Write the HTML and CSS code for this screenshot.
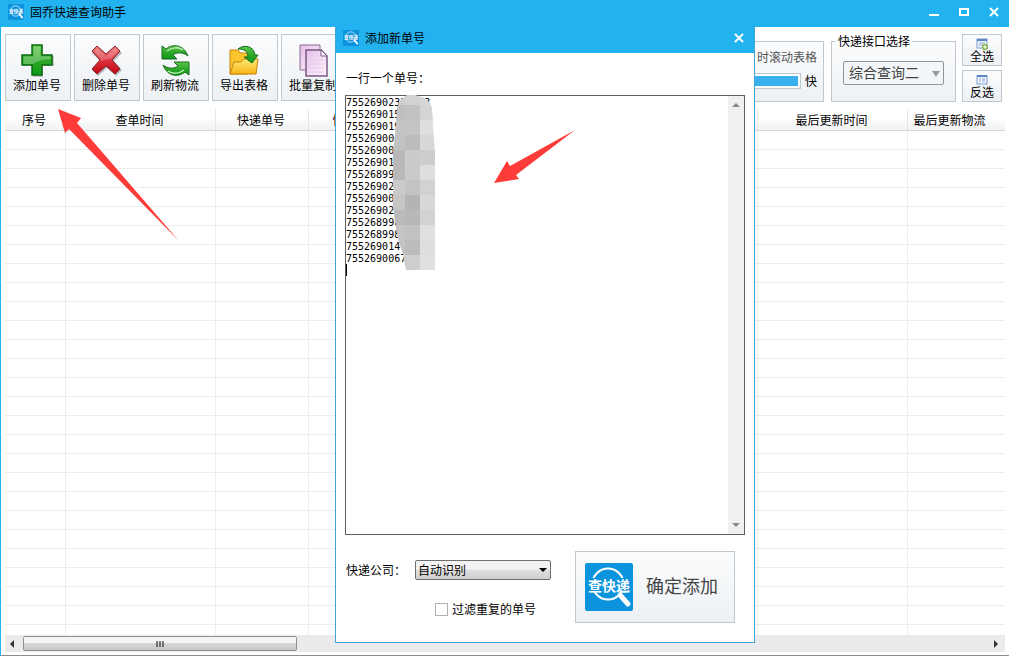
FILE: index.html
```html
<!DOCTYPE html>
<html lang="zh-CN">
<head>
  <meta charset="UTF-8" />
  <meta name="viewport" content="width=device-width, initial-scale=1.0" />
  <title>固乔快递查询助手</title>
  <link rel="stylesheet" href="styles.css">
</head>
<body>
  <!-- Shared logo and gradients -->
  <svg class="defs" aria-hidden="true">
    <defs>
      <linearGradient id="gGreen" x1="0" y1="0" x2="0" y2="1">
        <stop offset="0" stop-color="#5cc94c" />
        <stop offset="0.5" stop-color="#2fa82a" />
        <stop offset="1" stop-color="#0c9a14" />
      </linearGradient>
      <linearGradient id="gRed" x1="0" y1="0" x2="0" y2="1">
        <stop offset="0" stop-color="#ec7b7b" />
        <stop offset="0.5" stop-color="#dc3440" />
        <stop offset="1" stop-color="#c00512" />
      </linearGradient>
      <linearGradient id="gFolder" x1="0" y1="0" x2="0" y2="1">
        <stop offset="0" stop-color="#ffe873" />
        <stop offset="1" stop-color="#f7b516" />
      </linearGradient>
      <linearGradient id="gPage" x1="0" y1="0" x2="1" y2="1">
        <stop offset="0" stop-color="#e6bfe8" />
        <stop offset="1" stop-color="#fdf5fd" />
      </linearGradient>
      <symbol id="logo" viewBox="0 0 48 48">
        <rect width="48" height="48" rx="2" fill="#0c93de" />
        <circle cx="23" cy="21" r="15.500" fill="none" stroke="#fff" stroke-width="2" />
        <path d="M35 32L43 41" stroke="#fff" stroke-width="5" stroke-linecap="round" />
        <rect x="3" y="15" width="42" height="14" fill="#0c93de" />
        <text x="24" y="28" text-anchor="middle" class="logo-text">查快递</text>
      </symbol>
    </defs>
  </svg>

  <div class="window">
    <header class="title-bar">
      <svg class="title-logo"><use href="#logo" /></svg>
      <h1 class="title">固乔快递查询助手</h1>
      <div class="window-buttons">
        <button type="button" class="window-btn" aria-label="最小化">
          <svg width="12" height="12"><path d="M1 9H11" stroke="#fff" stroke-width="2" /></svg>
        </button>
        <button type="button" class="window-btn" aria-label="最大化">
          <svg width="12" height="12"><rect x="2" y="3" width="8" height="6" fill="none" stroke="#fff" stroke-width="2" /></svg>
        </button>
        <button type="button" class="window-btn" aria-label="关闭">
          <svg width="12" height="12"><path d="M2 2L10 10M10 2L2 10" stroke="#fff" stroke-width="2" /></svg>
        </button>
      </div>
    </header>

    <!-- Toolbar -->
    <div class="toolbar">
      <button type="button" class="tool-btn">
        <svg class="tool-icon" viewBox="0 0 34 34">
          <path d="M13 3H23V13H34V23H23V34H13V23H3V13H13Z" fill="#000" opacity="0.2" />
          <path d="M12 2H22V12H32V22H22V32H12V22H2V12H12Z" fill="url(#gGreen)" stroke="#0b6b10" stroke-width="1.500" />
          <path d="M13.500 3.500H20.500V13.500H30.500V16C22 16 16 19 13 21H3.500V13.500H13.500Z" fill="#fff" opacity="0.25" />
        </svg>
        添加单号
      </button>
      <button type="button" class="tool-btn">
        <svg class="tool-icon" viewBox="0 0 34 34">
          <path d="M9 4L18 12L27 4L33 10L25 18L33 27L27 33L18 25L9 33L3 27L11 18L3 10Z" fill="#000" opacity="0.25" />
          <path d="M8 3L17 11L26 3L31 8L23 17L31 26L26 31L17 23L8 31L3 26L11 17L3 8Z" fill="url(#gRed)" stroke="#8a2028" stroke-width="1" />
          <path d="M8 5L17 13L26 5L29 8L22 16Q15 16 11 19L12 17L5 8Z" fill="#fff" opacity="0.2" />
        </svg>
        删除单号
      </button>
      <button type="button" class="tool-btn">
        <svg class="tool-icon" viewBox="0 0 34 34">
          <g fill="url(#gGreen)" stroke="#176b20" stroke-width="1">
            <path d="M4 3L8 6C15 0 26 2 30 13C25 9 19 9 15 12L19 16H4Z" />
            <path d="M31 32L27 29C20 35 9 33 5 22C10 26 16 26 20 23L16 19H31Z" />
          </g>
          <path d="M9 8C14 4 21 4 25 7M26 27C21 31 14 31 10 28" fill="none" stroke="#b8f0b0" stroke-width="1.500" />
        </svg>
        刷新物流
      </button>
      <button type="button" class="tool-btn">
        <svg class="tool-icon" viewBox="0 0 34 34">
          <path d="M3 31V7H11L13 10H21V31Z" fill="#fbc52c" stroke="#c8830c" />
          <path d="M3 31L7 19H14L17 16H31L29 31Z" fill="url(#gFolder)" stroke="#c8830c" />
          <path d="M11 6C17 1 27 3 28 12H31L25 20L17 14H21C21 8 17 6 11 6Z" fill="url(#gGreen)" stroke="#176b20" />
        </svg>
        导出表格
      </button>
      <button type="button" class="tool-btn">
        <svg class="tool-icon" viewBox="0 0 34 34">
          <path d="M4 2H24V27H4Z" fill="url(#gPage)" stroke="#8c6a94" />
          <path d="M10 7H25L31 13V33H10Z" fill="url(#gPage)" stroke="#7a5a84" stroke-width="1.500" />
          <path d="M25 7V13H31Z" fill="#fff" stroke="#7a5a84" />
          <path d="M13 17H28M13 21H28M13 25H28M13 29H28" stroke="#e6cbe9" />
        </svg>
        批量复制
      </button>

      <div class="options">
        <fieldset class="group scroll-group">
          <label for="speed" class="soft-text">时滚动表格</label>
          <div class="speed-row">
            <input type="range" id="speed" class="speed" value="100">
            <span>快</span>
          </div>
        </fieldset>

        <fieldset class="group api-group">
          <legend>快递接口选择</legend>
          <div class="select-wrap api-wrap">
            <select class="api-select" aria-label="快递接口选择">
              <option>综合查询二</option>
            </select>
          </div>
        </fieldset>

        <div class="side-buttons">
          <button type="button" class="side-btn">
            <svg width="12" height="12" viewBox="0 0 12 12">
              <rect x="1" y="1" width="10" height="9" fill="#eef4ff" stroke="#7f9ccc" />
              <path d="M1 2H11" stroke="#5b83c8" stroke-width="2" />
              <path d="M3 5H9M3 7H7" stroke="#8aa8d8" />
              <circle cx="9" cy="9" r="3" fill="#7fae3c" />
              <path d="M7 9H11M9 7V11" stroke="#fff" />
            </svg>
            全选
          </button>
          <button type="button" class="side-btn">
            <svg width="12" height="12" viewBox="0 0 12 12">
              <rect x="1" y="2" width="10" height="8" fill="#eef4ff" stroke="#7f9ccc" />
              <path d="M1 2H11" stroke="#5b83c8" stroke-width="2" />
              <path d="M3 5H5M6 5H9M3 7H5M6 7H9" stroke="#8aa8d8" />
            </svg>
            反选
          </button>
        </div>
      </div>
    </div>

    <!-- Order list -->
    <div class="list">
      <table class="orders">
        <colgroup>
          <col class="col-index">
          <col class="col-time">
          <col class="col-number">
          <col class="col-company">
          <col>
          <col class="col-time">
          <col class="col-last">
        </colgroup>
        <thead>
          <tr>
            <th>序号</th>
            <th>查单时间</th>
            <th>快递单号</th>
            <th>快递公司</th>
            <th></th>
            <th>最后更新时间</th>
            <th class="last">最后更新物流</th>
          </tr>
        </thead>
        <tbody id="orderRows"></tbody>
      </table>
    </div>

    <div class="h-scroll">
      <svg width="8" height="8"><path d="M6 0V8L2 4Z" fill="#333" /></svg>
      <div class="h-track">
        <div class="h-thumb">
          <svg width="9" height="6"><path d="M1 0V6M4 0V6M7 0V6" stroke="#555" stroke-width="2" opacity="0.8" /></svg>
        </div>
      </div>
      <svg width="8" height="8"><path d="M2 0V8L6 4Z" fill="#333" /></svg>
    </div>
  </div>

  <!-- Add dialog -->
  <section class="dialog" role="dialog" aria-labelledby="dialogTitle">
    <header class="dialog-bar">
      <svg class="title-logo"><use href="#logo" /></svg>
      <h2 class="title" id="dialogTitle">添加新单号</h2>
      <button type="button" class="window-btn" aria-label="关闭">
        <svg width="12" height="12"><path d="M2 2L10 10M10 2L2 10" stroke="#fff" stroke-width="2" /></svg>
      </button>
    </header>

    <form class="dialog-body">
      <label for="numbers" class="numbers-label">一行一个单号：</label>
      <div class="numbers-box">
        <textarea id="numbers" class="numbers" wrap="off" spellcheck="false">
7552690233   3
755269015
755269019
75526900
75526900
75526901
75526899
75526902
75526900
75526902
755268998
755268998
755269014
7552690067
</textarea>
        <div class="v-scroll">
          <svg width="8" height="4"><path d="M0 4L4 0L8 4Z" fill="#888" /></svg>
          <svg width="8" height="4"><path d="M0 0L4 4L8 0Z" fill="#888" /></svg>
        </div>
        <span class="caret"></span>
        <!-- Mosaic over the end of the numbers -->
        <svg class="mosaic" width="42" height="175" viewBox="393 95 42 175">
          <clipPath id="blob">
            <path d="M407 95H415L425 98L430 103L432 108L434 138L435 152V270H406L403 255L398 238L395 222L393 205V152L396 125L397 108L400 100Z" />
          </clipPath>
          <g clip-path="url(#blob)" id="mosaicCells"></g>
        </svg>
      </div>

      <div class="dialog-footer">
        <div class="settings">
          <div class="company-row">
            <label for="company">快递公司：</label>
            <div class="select-wrap company-wrap">
              <select id="company" class="company-select">
                <option>自动识别</option>
              </select>
            </div>
          </div>
          <label class="filter-row">
            <input type="checkbox" class="filter-box">
            过滤重复的单号
          </label>
        </div>
        <button type="button" class="confirm-btn">
          <svg class="confirm-logo"><use href="#logo" /></svg>
          <span class="confirm-text">确定添加</span>
        </button>
      </div>
    </form>
  </section>

  <!-- Guide arrows -->
  <svg class="arrow arrow-add" width="121" height="132" viewBox="58 109 121 132">
    <path d="M58 109L81 118L77 123L179 241L69 129L65 133Z" fill="#fd3c3a" />
  </svg>
  <svg class="arrow arrow-numbers" width="81" height="53" viewBox="494 130 81 53">
    <path d="M494 183L507 161L510 166L575 130L516 175L519 179Z" fill="#fd3c3a" />
  </svg>

  <script src="script.js"></script>
</body>
</html>
```

FILE: styles.css
```css
:root {
  --blue: #22b2ef;
  --line: #bfc8d0;
  --panel: linear-gradient(#fbfcfd, #edf1f4);
}

* {
  box-sizing: border-box;
}

html, body {
  height: 100%;
  margin: 0;
}

body {
  font-family: "Noto Sans CJK SC", sans-serif;
  font-size: 12px;
  line-height: 16px;
  color: #000;
  background: #fff;
  overflow: hidden;
}

button, select, input, textarea {
  font: inherit;
  color: inherit;
  margin: 0;
}

svg {
  display: block;
  flex: none;
}

.defs {
  position: absolute;
  width: 0;
  height: 0;
}

.logo-text {
  font-size: 14px;
  font-weight: 700;
  fill: #fff;
}

.window {
  display: flex;
  flex-direction: column;
  height: 100vh;
  border-left: 1px solid var(--blue);
  border-bottom: 1px solid #8c8c8c;
}

/* Title bars */
.title-bar, .dialog-bar {
  display: flex;
  align-items: center;
  background: var(--blue);
  padding: 0 9px 3px 7px;
  height: 27px;
  flex: none;
}

.title-logo {
  width: 16px;
  height: 16px;
}

.title {
  flex: 1;
  margin: 0 0 0 6px;
  font-size: 12px;
  font-weight: 400;
}

.window-buttons {
  display: flex;
  gap: 18px;
}

.window-btn {
  border: 0;
  padding: 0;
  background: none;
}

/* Toolbar */
.toolbar {
  display: flex;
  gap: 3px;
  padding: 7px 7px 7px 4px;
}

.tool-btn {
  display: flex;
  flex-direction: column;
  align-items: center;
  flex: none;
  width: 66px;
  height: 67px;
  padding: 8px 2px 0 0;
  border: 1px solid var(--line);
  background: var(--panel);
  white-space: nowrap;
}

.tool-icon {
  width: 34px;
  height: 34px;
}

.options {
  display: flex;
  flex: none;
  align-items: flex-end;
  margin-left: auto;
}

.group {
  margin: 0;
  border: 1px solid var(--line);
  background: var(--panel);
}

.group legend {
  padding: 0 2px;
  line-height: 12px;
}

.scroll-group {
  width: 180px;
  height: 61px;
  margin-right: 7px;
  padding: 7px 6px;
  text-align: right;
}

.soft-text {
  color: #555;
}

.speed-row {
  display: flex;
  align-items: center;
  gap: 4px;
  margin-top: 8px;
}

.speed {
  appearance: none;
  flex: 1;
  min-width: 0;
  height: 16px;
  padding: 2px;
  border: 1px solid var(--line);
  background: linear-gradient(#38b1ec, #38b1ec) content-box, #fff;
}

.speed::-webkit-slider-thumb {
  appearance: none;
  width: 0;
}

.api-group {
  width: 125px;
  height: 67px;
  margin-right: 6px;
  padding: 14px 11px 0;
}

.api-group legend {
  margin-left: -7px;
}

.select-wrap {
  position: relative;
}

.select-wrap select {
  appearance: none;
  display: block;
  width: 100%;
  border-radius: 2px;
}

/* drop-down triangle */
.select-wrap::after {
  content: "";
  position: absolute;
  top: 50%;
  right: 4px;
  margin-top: -2px;
  border: 4px solid transparent;
  border-top-color: #000;
  border-bottom: 0;
  pointer-events: none;
}

.api-wrap::after {
  border-top-color: #999;
  border-top-width: 6px;
}

.select-wrap .api-select {
  height: 24px;
  padding: 0 5px 2px;
  border: 1px solid #8e969c;
  background: #f3f6f8;
  color: #444;
  font-size: 14px;
  line-height: 20px;
}

.side-buttons {
  display: flex;
  flex-direction: column;
  gap: 4px;
}

.side-btn {
  display: flex;
  flex-direction: column;
  align-items: center;
  width: 40px;
  height: 32px;
  padding: 3px 0 0;
  border: 1px solid var(--line);
  background: var(--panel);
  line-height: 12px;
}

/* List */
.list {
  flex: 1;
  min-height: 0;
  margin: 0 4px;
  overflow: hidden;
}

.orders {
  width: 100%;
  table-layout: fixed;
  border-collapse: separate;
  border-spacing: 0;
}

.col-index { width: 61px; }
.col-time { width: 150px; }
.col-number { width: 93px; }
.col-company { width: 98px; }
.col-last { width: 97px; }

.orders th {
  height: 22px;
  padding: 0 2px 0 0;
  font-weight: 400;
  border-right: 1px solid #e3e6e8;
  border-bottom: 1px solid #d5d8da;
  background: linear-gradient(#fff 40%, #f0f1f3);
}

.orders th.last {
  padding-right: 14px;
}

.orders td {
  height: 19px;
  padding: 0;
  border-right: 1px solid #ececec;
  border-bottom: 1px solid #ececec;
}

.orders th:last-child, .orders td:last-child {
  border-right: 0;
}

.h-scroll {
  display: flex;
  align-items: center;
  flex: none;
  height: 17px;
  margin: 0 4px 3px;
  padding: 0 5px 0 3px;
  background: #ebebeb;
}

.h-track {
  flex: 1;
  padding: 0 7px;
}

.h-thumb {
  display: flex;
  align-items: center;
  justify-content: center;
  width: 28.5%;
  height: 15px;
  border: 1px solid #8f8f8f;
  border-radius: 2px;
  background: linear-gradient(#f4f4f4 45%, #d6d6d6 50%, #c8c8c8);
}

/* Dialog */
.dialog {
  position: absolute;
  top: 25px;
  left: 335px;
  width: 420px;
  border: 1px solid #3fa4db;
  border-top: 0;
  background: #fff;
}

.dialog-bar {
  height: 28px;
}

.dialog-body {
  padding: 17px 9px 19px;
}

.numbers-label {
  display: block;
  margin-bottom: 9px;
  padding-left: 1px;
}

.numbers-box {
  position: relative;
  display: flex;
  height: 440px;
  border: 1px solid #5e5e63;
}

.numbers {
  flex: 1;
  min-width: 0;
  padding: 1px 0 0;
  border: 0;
  outline: 0;
  resize: none;
  overflow: hidden;
  font-family: "DejaVu Sans Mono", monospace;
  font-size: 10px;
  line-height: 12px;
}

.v-scroll {
  display: flex;
  flex-direction: column;
  align-items: center;
  justify-content: space-between;
  width: 16px;
  padding: 7px 0;
  background: #f0f0f0;
}

.caret {
  position: absolute;
  top: 168px;
  left: 0;
  width: 1px;
  height: 12px;
  background: #000;
}

.mosaic {
  position: absolute;
  top: -1px;
  left: 47px;
}

.dialog-footer {
  display: flex;
  justify-content: space-between;
  padding: 16px 10px 0 1px;
}

.settings {
  padding-top: 9px;
}

.company-row {
  display: flex;
  align-items: center;
}

.company-row label {
  width: 69px;
}

.company-wrap {
  width: 136px;
}

.select-wrap .company-select {
  height: 20px;
  padding: 0 2px;
  border: 1px solid #707070;
  background: linear-gradient(#f3f3f3 45%, #dedede 50%, #d0d0d0);
  line-height: 18px;
}

.filter-row {
  display: flex;
  align-items: center;
  gap: 4px;
  margin: 21px 0 0 89px;
}

.filter-box {
  appearance: none;
  width: 13px;
  height: 13px;
  border: 1px solid #b0b0b0;
  background: #fff;
}

.confirm-btn {
  display: flex;
  align-items: center;
  gap: 13px;
  width: 160px;
  height: 72px;
  padding: 0 9px;
  border: 1px solid var(--line);
  background: var(--panel);
  color: #444;
  font-size: 18px;
  line-height: 24px;
  white-space: nowrap;
}

.confirm-text {
  padding-bottom: 4px;
}

.confirm-logo {
  width: 48px;
  height: 48px;
}

/* Guide arrows */
.arrow {
  position: absolute;
  pointer-events: none;
}

.arrow-add {
  top: 109px;
  left: 58px;
}

.arrow-numbers {
  top: 130px;
  left: 494px;
}
```

FILE: script.js
```js
// Empty rows of the list
const rows = document.getElementById('orderRows');
for (let i = 0; i < 27; i++) {
  const tr = rows.insertRow();
  for (let j = 0; j < 7; j++) {
    tr.insertCell();
  }
}

// Grey levels of the mosaic, one line for each row of 15px cells
const cells = [
  ['#d0d0d0', '#d2d2d2', '#d6d6d6'],
  ['#c0c0c0', '#c2c2c2', '#d4d4d4'],
  ['#c4c4c4', '#c4c4c4', '#dedede'],
  ['#c2c2c2', '#bcbcbc', '#d8d8d8'],
  ['#b8b8b8', '#cbcbcb', '#cdcdcd'],
  ['#b8b8b8', '#cacaca', '#dedede'],
  ['#cacaca', '#c4c4c4', '#d2d2d2'],
  ['#c6c6c6', '#b4b4b4', '#d8d8d8'],
  ['#bababa', '#b8b8b8', '#d2d2d2'],
  ['#c4c4c4', '#c2c2c2', '#e0e0e0'],
  ['#c2c2c2', '#bcbcbc', '#dedede'],
  ['#d2d2d2', '#cecece', '#e0e0e0']
];
const mosaic = document.getElementById('mosaicCells');
cells.forEach(function (line, y) {
  line.forEach(function (color, x) {
    const rect = document.createElementNS('http://www.w3.org/2000/svg', 'rect');
    rect.setAttribute('x', 390 + x * 15);
    rect.setAttribute('y', 90 + y * 15);
    rect.setAttribute('width', 15);
    rect.setAttribute('height', 15);
    rect.setAttribute('fill', color);
    mosaic.appendChild(rect);
  });
});
```
